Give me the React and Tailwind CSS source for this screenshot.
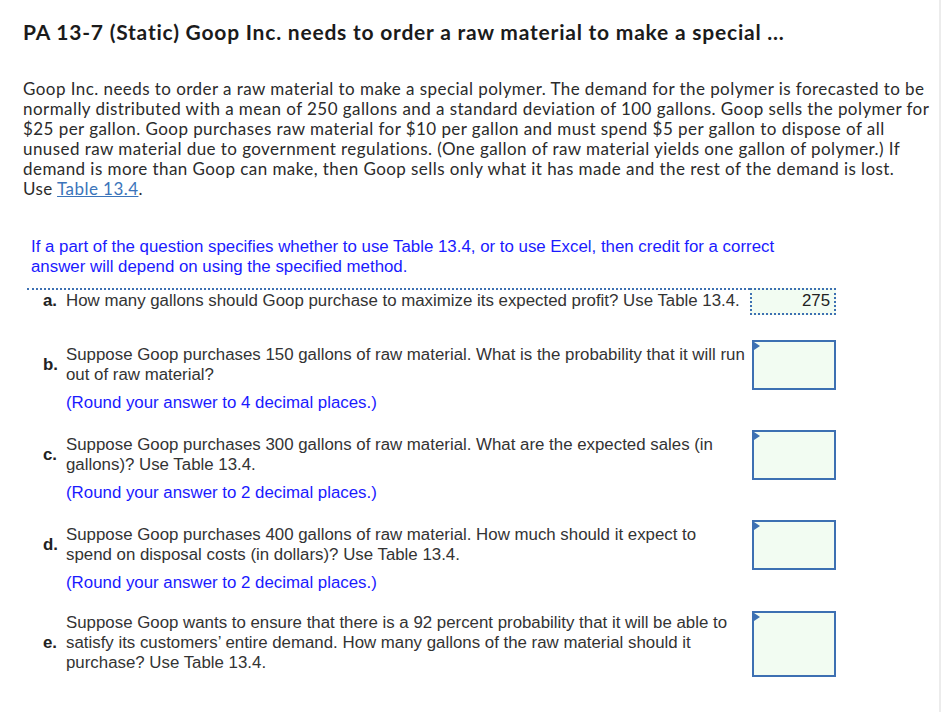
import React from 'react';

const para = [
  'Goop Inc. needs to order a raw material to make a special polymer. The demand for the polymer is forecasted to be',
  'normally distributed with a mean of 250 gallons and a standard deviation of 100 gallons. Goop sells the polymer for',
  '$25 per gallon. Goop purchases raw material for $10 per gallon and must spend $5 per gallon to dispose of all',
  'unused raw material due to government regulations. (One gallon of raw material yields one gallon of polymer.) If',
  'demand is more than Goop can make, then Goop sells only what it has made and the rest of the demand is lost.',
];

const AnswerBox = ({ h }) => (
  <div className={`relative w-[84px] ${h} border-2 border-[#3d70b2] bg-[#f2fcf2]`}>
    {/* little corner flag */}
    <div className="absolute left-0 top-0 w-0 h-0 border-t-[4px] border-b-[4px] border-l-[6px] border-t-transparent border-b-transparent border-l-[#3d70b2]" />
  </div>
);

const Question = ({ label, lines, round, top, boxH, rowH }) => (
  <div className={`flex ${rowH}`}>
    <div className="w-[724px]">
      <div className={`flex items-center ${top}`}>
        <div className="w-[39px] pl-[16px] font-bold text-[#222]">{label}</div>
        <div className="text-[#333]">
          {lines.map((l) => (
            <div key={l} className="whitespace-nowrap">{l}</div>
          ))}
        </div>
      </div>
      {round && <div className="pl-[39px] mt-[8px] text-[#1a1aff]">{round}</div>}
    </div>
    <div className="pl-[1px]">
      <AnswerBox h={boxH} />
    </div>
  </div>
);

export default function App() {
  return (
    <div className="w-[941px] h-[712px] bg-white border-r-2 border-[#ececec] overflow-hidden">
      <div className="pl-[23px] pt-[20px]" style={{ fontFamily: 'Lato, "Open Sans", sans-serif' }}>
        <h1 className="text-[21px] leading-[24px] font-bold tracking-[0.78px] text-[#1b1b1b] whitespace-nowrap">
          PA 13-7 (Static) Goop Inc. needs to order a raw material to make a special ...
        </h1>
        <div className="mt-[35px] text-[17px] leading-[20px] tracking-[0.44px] text-[#2b2b2b]">
          {para.map((l) => (
            <div key={l} className="whitespace-nowrap">{l}</div>
          ))}
          <div>
            Use <span className="text-[#3b74ba] underline">Table 13.4</span>.
          </div>
        </div>
      </div>

      <div className="pl-[27px]" style={{ fontFamily: '"Liberation Sans", Arial, sans-serif' }}>
        <div className="mt-[38px] pl-[4px] text-[16.85px] leading-[20px] text-[#1a1aff]">
          <div>If a part of the question specifies whether to use Table 13.4, or to use Excel, then credit for a correct</div>
          <div>answer will depend on using the specified method.</div>
        </div>

        <div className="mt-[11px] text-[16.85px] leading-[20px]">
          {/* row a */}
          <div className="flex h-[52px]">
            <div className="w-[723px] border-t-2 border-dotted border-[#3d70b2]">
              <div className="flex pt-[1px]">
                <div className="w-[39px] pl-[16px] font-bold text-[#222]">a.</div>
                <div className="text-[#333] whitespace-nowrap">
                  How many gallons should Goop purchase to maximize its expected profit? Use Table 13.4.
                </div>
              </div>
            </div>
            <div className="w-[86px] h-[27px] border-2 border-dotted border-[#3d70b2] bg-[#f2fcf2] text-right pr-[4px] leading-[22px] text-[#222]">
              275
            </div>
          </div>

          <Question
            label="b."
            lines={['Suppose Goop purchases 150 gallons of raw material. What is the probability that it will run', 'out of raw material?']}
            round="(Round your answer to 4 decimal places.)"
            top="pt-[5px]"
            boxH="h-[50px]"
            rowH="h-[90px]"
          />
          <Question
            label="c."
            lines={['Suppose Goop purchases 300 gallons of raw material. What are the expected sales (in', 'gallons)? Use Table 13.4.']}
            round="(Round your answer to 2 decimal places.)"
            top="pt-[5px]"
            boxH="h-[50px]"
            rowH="h-[90px]"
          />
          <Question
            label="d."
            lines={['Suppose Goop purchases 400 gallons of raw material. How much should it expect to', 'spend on disposal costs (in dollars)? Use Table 13.4.']}
            round="(Round your answer to 2 decimal places.)"
            top="pt-[5px]"
            boxH="h-[50px]"
            rowH="h-[91px]"
          />
          <Question
            label="e."
            lines={[
              'Suppose Goop wants to ensure that there is a 92 percent probability that it will be able to',
              'satisfy its customers’ entire demand. How many gallons of the raw material should it',
              'purchase? Use Table 13.4.',
            ]}
            top="pt-[2px]"
            boxH="h-[66px]"
            rowH="h-[80px]"
          />
        </div>
      </div>
    </div>
  );
}
